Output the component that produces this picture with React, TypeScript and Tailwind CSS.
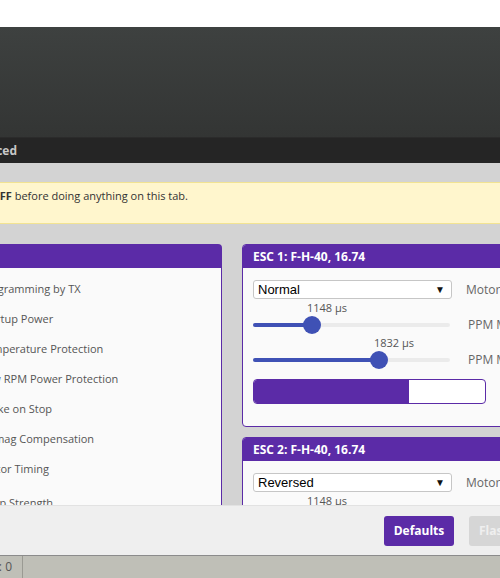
import React from 'react';

const PURPLE = 'bg-[#5b2ba7]';

const leftRows = [
  'Programming by TX',
  'Startup Power',
  'Temperature Protection',
  'Low RPM Power Protection',
  'Brake on Stop',
  'Demag Compensation',
  'Motor Timing',
];

function Select({ value }: { value: string }) {
  return (
    <div className="w-[199px] h-[19px] shrink-0 bg-white border border-[#c6c6c6] rounded-[3px] flex items-center justify-between pl-[4px] pr-[6px] font-['Liberation_Sans',sans-serif] text-[13px] text-black">
      <span>{value}</span>
      <span className="text-[10px] leading-none text-[#111]">▼</span>
    </div>
  );
}

function Slider({ label, pos }: { label: string; pos: number }) {
  // pos = thumb centre in px from the track's left edge
  return (
    <div className="w-[197px] shrink-0">
      <div className="h-[17px] relative">
        <span className="absolute top-[1px] text-[11px] text-[#555] whitespace-nowrap" style={{ left: pos - 5 }}>
          {label}
        </span>
      </div>
      <div className="h-[18px] relative flex items-center">
        <div className="w-full h-[4px] rounded-full bg-[#ebebeb]" />
        <div className="absolute left-0 h-[4px] rounded-full bg-[#3f51b5]" style={{ width: pos }} />
        <div className="absolute w-[18px] h-[18px] rounded-full bg-[#3f51b5]" style={{ left: pos - 9 }} />
      </div>
    </div>
  );
}

function EscPanel({ title, mode }: { title: string; mode: string }) {
  return (
    <div className="rounded-[4px] border border-[#5b2ba7] bg-[#fafafa] overflow-hidden">
      <div className={`h-[23px] ${PURPLE} px-[10px] flex items-center text-white text-[12px] font-bold`}>{title}</div>
      <div className="px-[10px] pt-[12px] pb-[22px]">
        <div className="flex items-center">
          <Select value={mode} />
          <span className="ml-[14px] text-[12px] text-[#666] whitespace-nowrap">Motor Direction</span>
        </div>
        <div className="flex items-end">
          <Slider label="1148 µs" pos={59} />
          <span className="ml-[18px] h-[18px] flex items-center text-[12px] text-[#666] whitespace-nowrap">PPM Min Throttle</span>
        </div>
        <div className="flex items-end">
          <Slider label="1832 µs" pos={126} />
          <span className="ml-[18px] h-[18px] flex items-center text-[12px] text-[#666] whitespace-nowrap">PPM Max Throttle</span>
        </div>
        <div className="mt-[10px] w-[233px] h-[25px] rounded-[4px] border border-[#5b2ba7] bg-white overflow-hidden">
          <div className={`h-full w-[155px] ${PURPLE}`} />
        </div>
      </div>
    </div>
  );
}

export default function App() {
  return (
    <div className="w-[500px] h-[578px] overflow-hidden flex flex-col bg-white font-['Open_Sans',sans-serif]">
      <div className="h-[27px] shrink-0 bg-white" />
      <div className="h-[110px] shrink-0 bg-gradient-to-b from-[#3e4140] to-[#333534]" />
      <div className="h-[26px] shrink-0 bg-[#252525] border-t border-[#2b2b2b] flex items-center">
        <div className="w-[17px] flex justify-end">
          <span className="whitespace-nowrap text-[12px] font-bold text-[#c8c8c8]">Advanced</span>
        </div>
      </div>

      <div className="h-[342px] shrink-0 overflow-hidden bg-[#d3d3d3] pt-[19px]">
        <div className="w-[560px] h-[42px] bg-[#fff6cd] border-y border-[#f2e392] pt-[5px] text-[11px] text-[#333] whitespace-nowrap">
          <span className="-ml-[9px]">
            <b>OFF</b> before doing anything on this tab.
          </span>
        </div>

        <div className="mt-[20px] flex gap-[20px]">
          <div className="w-[222px] shrink-0 rounded-tr-[4px] overflow-hidden">
            <div className={`h-[24px] ${PURPLE}`} />
            <div className="bg-[#fafafa] border-r border-[#5b2ba7] pt-[6px] pb-[40px]">
              {leftRows.map((r) => (
                <div key={r} className="h-[30px] flex items-center">
                  <span className="-ml-[20px] whitespace-nowrap text-[11px] text-[#555]">{r}</span>
                </div>
              ))}
              <div className="mt-[4px] h-[30px] flex items-center">
                <span className="-ml-[20px] whitespace-nowrap text-[11px] text-[#555]">Beep Strength</span>
              </div>
            </div>
          </div>

          <div className="w-[300px] shrink-0 flex flex-col gap-[10px]">
            <EscPanel title="ESC 1: F-H-40, 16.74" mode="Normal" />
            <EscPanel title="ESC 2: F-H-40, 16.74" mode="Reversed" />
          </div>
        </div>
      </div>

      <div className="h-[51px] shrink-0 bg-[#efefef] border-t border-[#e2e2e2] border-b border-b-[#8c8c8c] flex gap-[15px] pl-[384px] pt-[10px]">
        <div className="w-[70px] h-[30px] shrink-0 rounded-[3px] bg-[#5b2ba7] flex items-center justify-center text-white text-[12px] font-bold">
          Defaults
        </div>
        <div className="w-[90px] h-[30px] shrink-0 rounded-[3px] bg-[#d6d6d6] flex items-center pl-[10px] text-[#efefef] text-[12px] font-bold whitespace-nowrap">
          Flash all
        </div>
      </div>

      <div className="h-[22px] shrink-0 bg-[#bfbfb7] flex items-stretch">
        <div className="w-[23px] shrink-0 border-r border-[#9a9a93] flex justify-end items-center pr-[10px]">
          <span className="whitespace-nowrap text-[12px] text-[#555]">Packet error: 0</span>
        </div>
      </div>
    </div>
  );
}
